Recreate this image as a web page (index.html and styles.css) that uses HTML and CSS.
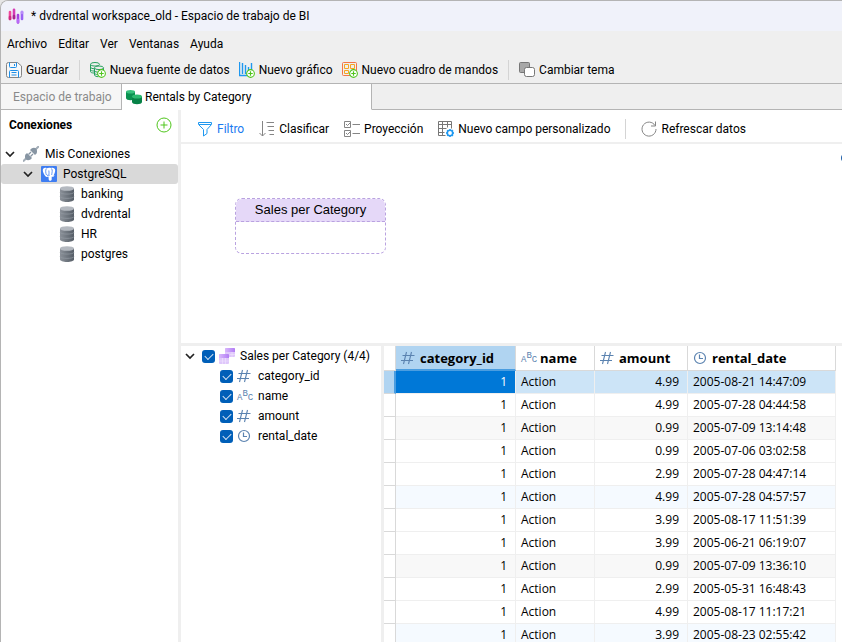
FILE: index.html
```html
<!DOCTYPE html>
<html lang="es">
<head>
    <meta charset="UTF-8">
    <title>dvdrental workspace_old - Espacio de trabajo de BI</title>
    <link rel="stylesheet" href="styles.css">
</head>
<body>
    <!-- Iconos compartidos -->
    <svg class="sprite" width="0" height="0">
        <defs>
            <linearGradient id="grayBand" x1="0" x2="1"><stop offset="0" stop-color="#8a9098"/><stop offset="1" stop-color="#555d66"/></linearGradient>
            <linearGradient id="purpleBand" x1="0" x2="1"><stop offset="0" stop-color="#d9b8fb"/><stop offset="1" stop-color="#b27cf5"/></linearGradient>
        </defs>
        <symbol id="chevron" viewBox="0 0 10 10"><path d="M1 3 5 7 9 3" fill="none" stroke="#222" stroke-width="1.700"/></symbol>
        <symbol id="plus" viewBox="0 0 10 10"><circle cx="5" cy="5" r="4.300" fill="#fff" stroke="#4fc51c" stroke-width="1.200"/><path d="M5 2.500v5M2.500 5h5" stroke="#4fc51c" stroke-width="1.300"/></symbol>
        <symbol id="db" viewBox="0 0 16 16">
            <path d="M1 2.500v11c0 1.300 3 2.500 7 2.500s7-1.200 7-2.500v-11z" fill="url(#grayBand)"/>
            <path d="M1 6.200c0 2.500 14 2.500 14 0M1 10.500c0 2.500 14 2.500 14 0" fill="none" stroke="#949ba3" stroke-width=".7"/>
            <ellipse cx="8" cy="2.500" rx="7" ry="2.300" fill="#b4b9c0"/>
        </symbol>
        <symbol id="hash" viewBox="0 0 14 14"><path d="M5.500 1 2.500 13M10.500 1 7.500 13M1.500 4.500h12M0 9.500h12" fill="none" stroke="#5b83b0" stroke-width="1.100"/></symbol>
        <symbol id="clock" viewBox="0 0 14 14"><circle cx="7" cy="7" r="5.500" fill="none" stroke="#5b83b0" stroke-width="1.200"/><path d="M6.500 3.500v4H10" fill="none" stroke="#5b83b0" stroke-width="1.200"/></symbol>
    </svg>

    <div class="window">
        <header class="titlebar">
            <svg width="16" height="16" viewBox="0 0 16 16" fill="none" stroke-linecap="round" stroke-width="2.600">
                <path d="M2 4v7" stroke="#f0489c"/><path d="M6 1.800v8.500" stroke="#d63bb5"/><path d="M10 7v7.500" stroke="#a63fe0"/><path d="M14 4v7" stroke="#9a62f5"/>
                <path d="M2 9v2" stroke="#d02a80"/><path d="M6 8v2" stroke="#a8238f"/><path d="M10 12v2" stroke="#b867f7"/><path d="M14 4v1" stroke="#b88cfa"/>
            </svg>
            <span>* dvdrental workspace_old - Espacio de trabajo de BI</span>
        </header>

        <nav class="menubar">
            <a href="#">Archivo</a>
            <a href="#">Editar</a>
            <a href="#">Ver</a>
            <a href="#">Ventanas</a>
            <a href="#">Ayuda</a>
        </nav>

        <div class="toolbar">
            <button class="tool">
                <svg width="16" height="16" viewBox="0 0 16 16" fill="none"><path d="M2.500.5h9L15.500 4v9.500a2 2 0 0 1-2 2h-11a2 2 0 0 1-2-2v-11a2 2 0 0 1 2-2z" fill="#f8f8f8" stroke="#858585"/><path d="M3.500.5v4a1 1 0 0 0 1 1h5a1 1 0 0 0 1-1v-4M8.500 2v2M3.500 15.500v-6a1 1 0 0 1 1-1h7a1 1 0 0 1 1 1v6M5.500 10.500h5M5.500 13h5" stroke="#1e8fe8"/></svg>
                Guardar
            </button>
            <span class="separator"></span>
            <button class="tool">
                <svg width="16" height="16" viewBox="0 0 16 16" fill="none"><path d="M.5 2.500v7c0 1 1.500 1.500 3.500 1.500M.5 5c0 1.300 2 1.700 4 1.700M.5 7.500C.5 8.600 2 9 4 9" stroke="#26a05e"/><ellipse cx="5" cy="2.300" rx="4.500" ry="1.800" stroke="#26a05e"/><path d="M4.500 6v7c0 1 2 1.700 4 1.700M13.500 6v3M4.500 8.500c0 1.200 2 1.700 4.500 1.700M4.500 11c0 1 1.500 1.500 3.500 1.500" stroke="#26a05e"/><ellipse cx="9" cy="5.800" rx="4.500" ry="1.800" fill="#eee" stroke="#26a05e"/><use href="#plus" x="7" y="7" width="9" height="9"/></svg>
                Nueva fuente de datos
            </button>
            <button class="tool">
                <svg width="16" height="16" viewBox="0 0 16 16" fill="none"><path d="M.5 0v13.500H8M3.500 1v11M6.500 3v9M9.500 5v4M12.500 1v7" stroke="#1e98f0" stroke-width="1.400"/><use href="#plus" x="7" y="7" width="9" height="9"/></svg>
                Nuevo gráfico
            </button>
            <button class="tool">
                <svg width="16" height="16" viewBox="0 0 16 16" fill="none"><rect x=".5" y=".5" width="14" height="13" rx="1" stroke="#f47645"/><path d="M2.500 2.500h4v4h-4zM8.500 2.500h4v4h-4zM2.500 8.500h4v3h-4z" stroke="#f6a623"/><use href="#plus" x="7" y="7" width="9" height="9"/></svg>
                Nuevo cuadro de mandos
            </button>
            <span class="separator"></span>
            <button class="tool">
                <svg width="16" height="16" viewBox="0 0 16 16"><rect x=".5" y=".5" width="10" height="10" rx="1" fill="#a8a8a8" stroke="#777"/><rect x="5.500" y="5.500" width="10" height="9" rx="2" fill="#fff" stroke="#777"/></svg>
                Cambiar tema
            </button>
        </div>

        <div class="tabs">
            <button class="tab">Espacio de trabajo</button>
            <button class="tab active">
                <svg width="16" height="16" viewBox="0 0 16 16"><path d="M0 3v6c0 3 9 3 9 0V3z" fill="#0b9150"/><ellipse cx="4.500" cy="2.800" rx="4.500" ry="1.800" fill="#37c07c"/><path d="M6 7.500V13c0 3 10 3 10 0V7.500z" fill="#078247"/><ellipse cx="11" cy="7.500" rx="5" ry="2" fill="#2cba70"/></svg>
                Rentals by Category
            </button>
            <div class="tab-rest"></div>
        </div>

        <div class="workspace">
            <aside class="connections">
                <div class="connections-head">
                    <h2>Conexiones</h2>
                    <button class="add" aria-label="Añadir conexión">
                        <svg width="16" height="16" viewBox="0 0 16 16" fill="none" stroke="#4fc51c"><circle cx="8" cy="8" r="7"/><path d="M8 4.500v7M4.500 8h7"/></svg>
                    </button>
                </div>
                <ul class="tree">
                    <li class="level-1">
                        <svg class="arrow"><use href="#chevron"/></svg>
                        <svg width="16" height="16" viewBox="0 0 16 16"><path d="M0 15.500l3.500-3.500M12.500 3.500 16 0" stroke="#a3adb7" stroke-width="2"/><path d="M2.500 8.500 4 7l5 5-1.500 1.500c-1.500 1-3.500 1-4.500 0s-1.500-3.500-.5-5z" fill="#8795a3"/><path d="M7 4l1.500-1.500c1.500-1 3.500-1 4.500 0s1.500 3.500.5 5L12 9z" fill="#8795a3"/><path d="M5.500 8.500 8 6M7.500 10.500 10 8" stroke="#8795a3" stroke-width="1.300"/></svg>
                        <span>Mis Conexiones</span>
                    </li>
                    <li class="level-2 selected">
                        <svg class="arrow"><use href="#chevron"/></svg>
                        <svg width="16" height="16" viewBox="0 0 16 16"><rect width="16" height="16" rx="1" fill="#3e7df2"/><path d="M1.800 4.500c0-2.500 2-3.200 4-2.200 1.300-.8 3-.8 4.200-.2 2-.8 4.200 0 4.200 2.200 0 1.700-.8 3.700-1.700 5.200h1.200c-.5 1-1.700 1.300-3 1.200v2.800c-.3 1.700-2.700 1.700-3 0l-.2-3-1 .3c-1 .5-2-.1-2.600-1.300-.9-1.300-2.100-3.500-2.100-5z" fill="#fff"/><path d="M5.300 2.500c-1 2-.7 4.500.2 6.500M10.500 2.500c1.500 2 .3 4 .2 6.500M8 10c-.2-2 .3-3-.2-5.500M6 9.500 7.500 9" fill="none" stroke="#3e7df2" stroke-width=".8"/></svg>
                        <span>PostgreSQL</span>
                    </li>
                    <li class="level-3"><svg width="16" height="16"><use href="#db"/></svg><span>banking</span></li>
                    <li class="level-3"><svg width="16" height="16"><use href="#db"/></svg><span>dvdrental</span></li>
                    <li class="level-3"><svg width="16" height="16"><use href="#db"/></svg><span>HR</span></li>
                    <li class="level-3"><svg width="16" height="16"><use href="#db"/></svg><span>postgres</span></li>
                </ul>
            </aside>

            <main class="content">
                <div class="actions">
                    <button class="tool on">
                        <svg width="16" height="16" viewBox="0 0 16 16" fill="none" stroke="#1e98f0"><path d="M1.500 1.500h13v2L10 8.500v4L6.500 15V8.500L1.500 3.500zM2 3.500h12"/></svg>
                        Filtro
                    </button>
                    <button class="tool">
                        <svg width="16" height="16" viewBox="0 0 16 16" fill="none" stroke="#858585"><path d="M3.500 0v15M.5 12l3 3 3-3M7.500 1.500H15M8.500 5.500H15M9.500 9.500H15M10.500 13.500H15"/></svg>
                        Clasificar
                    </button>
                    <button class="tool">
                        <svg width="16" height="16" viewBox="0 0 16 16" fill="none" stroke="#858585"><path d="M.5.5h6v6h-6zM.5 9.500h6v6h-6zM2 3l1.500 1.500L6 2M2 12l1.500 1.500L6 11M8.500 3.500H16M8.500 12.500H16"/></svg>
                        Proyección
                    </button>
                    <button class="tool">
                        <svg width="16" height="16" viewBox="0 0 16 16" fill="none"><path d="M.5.500h13v7M.5.500v14h7M.5 3.500h13M.5 7.500h8M.5 11.500h6M4.500.500v14M9.500.500v6" stroke="#777"/><circle cx="12" cy="12" r="2.700" stroke="#1e98f0" stroke-width="1.600"/><path d="M12 8v1M12 15v1M8 12h1M15 12h1M9.200 9.200l.7.7M14.200 14.200l.7.7M9.200 14.800l.7-.7M14.200 9.800l.7-.7" stroke="#1e98f0" stroke-width="1.500"/></svg>
                        Nuevo campo personalizado
                    </button>
                    <span class="separator"></span>
                    <button class="tool">
                        <svg width="16" height="16" viewBox="0 0 16 16" fill="none" stroke="#858585"><path d="M14 4.500A7 7 0 1 0 15 8M14.500.5v4.500H10"/></svg>
                        Refrescar datos
                    </button>
                </div>

                <section class="canvas">
                    <div class="node"><div class="node-title">Sales per Category</div></div>
                    <span class="handle"></span>
                </section>

                <div class="bottom">
                    <section class="fields">
                        <div class="field root">
                            <svg class="arrow"><use href="#chevron"/></svg>
                            <input type="checkbox" id="all" checked>
                            <svg width="16" height="16" viewBox="0 0 16 16"><rect x="6" width="10" height="9" rx="1" fill="#dfc7fb"/><path d="M6 3V1a1 1 0 0 1 1-1h8a1 1 0 0 1 1 1v3H6z" fill="url(#purpleBand)"/><rect y="6" width="10" height="10" rx="1" fill="#dfc7fb"/><path d="M0 10V7a1 1 0 0 1 1-1h8a1 1 0 0 1 1 1v3z" fill="url(#purpleBand)"/><path d="M0 13h10M3.500 10v6M6.500 10v6M10.500 6.500H16M13 4v5" stroke="#f1e5fd" stroke-width=".6"/></svg>
                            <label for="all">Sales per Category (4/4)</label>
                        </div>
                        <div class="field">
                            <input type="checkbox" id="f-category" checked>
                            <svg class="type"><use href="#hash"/></svg>
                            <label for="f-category">category_id</label>
                        </div>
                        <div class="field">
                            <input type="checkbox" id="f-name" checked>
                            <span class="abc">A<sup>B</sup>C</span>
                            <label for="f-name">name</label>
                        </div>
                        <div class="field">
                            <input type="checkbox" id="f-amount" checked>
                            <svg class="type"><use href="#hash"/></svg>
                            <label for="f-amount">amount</label>
                        </div>
                        <div class="field">
                            <input type="checkbox" id="f-date" checked>
                            <svg class="type"><use href="#clock"/></svg>
                            <label for="f-date">rental_date</label>
                        </div>
                    </section>

                    <section class="grid">
                        <table>
                            <colgroup><col class="c-mark"><col class="c-id"><col class="c-name"><col class="c-amount"><col class="c-date"></colgroup>
                            <thead>
                                <tr>
                                    <th class="mark"></th>
                                    <th class="sorted"><div><svg class="type"><use href="#hash"/></svg>category_id</div></th>
                                    <th><div class="text-head"><span class="abc">A<sup>B</sup>C</span>name</div></th>
                                    <th><div><svg class="type"><use href="#hash"/></svg>amount</div></th>
                                    <th><div><svg class="type"><use href="#clock"/></svg>rental_date</div></th>
                                </tr>
                            </thead>
                            <tbody>
                                <tr class="current"><td class="mark"></td><td class="num">1</td><td>Action</td><td class="num">4.99</td><td>2005-08-21 14:47:09</td></tr>
                                <tr><td class="mark"></td><td class="num">1</td><td>Action</td><td class="num">4.99</td><td>2005-07-28 04:44:58</td></tr>
                                <tr><td class="mark"></td><td class="num">1</td><td>Action</td><td class="num">0.99</td><td>2005-07-09 13:14:48</td></tr>
                                <tr><td class="mark"></td><td class="num">1</td><td>Action</td><td class="num">0.99</td><td>2005-07-06 03:02:58</td></tr>
                                <tr><td class="mark"></td><td class="num">1</td><td>Action</td><td class="num">2.99</td><td>2005-07-28 04:47:14</td></tr>
                                <tr><td class="mark"></td><td class="num">1</td><td>Action</td><td class="num">4.99</td><td>2005-07-28 04:57:57</td></tr>
                                <tr><td class="mark"></td><td class="num">1</td><td>Action</td><td class="num">3.99</td><td>2005-08-17 11:51:39</td></tr>
                                <tr><td class="mark"></td><td class="num">1</td><td>Action</td><td class="num">3.99</td><td>2005-06-21 06:19:07</td></tr>
                                <tr><td class="mark"></td><td class="num">1</td><td>Action</td><td class="num">0.99</td><td>2005-07-09 13:36:10</td></tr>
                                <tr><td class="mark"></td><td class="num">1</td><td>Action</td><td class="num">2.99</td><td>2005-05-31 16:48:43</td></tr>
                                <tr><td class="mark"></td><td class="num">1</td><td>Action</td><td class="num">4.99</td><td>2005-08-17 11:17:21</td></tr>
                                <tr><td class="mark"></td><td class="num">1</td><td>Action</td><td class="num">3.99</td><td>2005-08-23 02:55:42</td></tr>
                            </tbody>
                        </table>
                    </section>
                </div>
            </main>
        </div>
    </div>
</body>
</html>
```
FILE: styles.css
```css
* {
    box-sizing: border-box;
}
body {
    margin: 0;
    background-color: #e6e6e6;
    color: #000;
    font: 12px/20px Roboto, "Open Sans", sans-serif;
}
button {
    padding: 0;
    border: none;
    background: none;
    color: inherit;
    font: inherit;
    cursor: pointer;
}
svg {
    flex: none;
}
.sprite {
    position: absolute;
}
.window {
    display: flex;
    flex-direction: column;
    height: 100vh;
    overflow: hidden;
    border: 1px solid #b4b4b4;
    border-width: 1px 0 0 1px;
    border-top-left-radius: 8px;
    background-color: #efefef;
}

/* Barra de título y menú */
.titlebar {
    display: flex;
    align-items: center;
    gap: 7px;
    height: 30px;
    padding-left: 7px;
    background-color: #f0f2fa;
}
.menubar {
    display: flex;
    align-items: center;
    gap: 11px;
    height: 26px;
    padding-left: 6px;
}
.menubar a {
    color: inherit;
    text-decoration: none;
}

/* Barras de herramientas */
.toolbar {
    display: flex;
    align-items: center;
    gap: 9px;
    height: 26px;
    padding-left: 5px;
}
.toolbar .separator {
    margin: 0 1px;
}
.tool {
    display: flex;
    align-items: center;
    gap: 4px;
    white-space: nowrap;
}
.tool.on {
    color: #1a7af0;
}
.separator {
    width: 1px;
    height: 20px;
    background-color: #d4d4d4;
}

/* Pestañas */
.tabs {
    display: flex;
    height: 27px;
    border-top: 1px solid #b4b4b4;
}
.tab {
    display: flex;
    align-items: center;
    width: 121px;
    padding-left: 12px;
    border-right: 1px solid #b4b4b4;
    border-bottom: 1px solid #b4b4b4;
    background-color: #f6f6f6;
    color: #8a8a8a;
    white-space: nowrap;
}
.tab.active {
    gap: 3px;
    width: 250px;
    padding-left: 4px;
    border-bottom-color: #fff;
    background-color: #fff;
    color: #000;
}
.tab-rest {
    flex: 1;
    border-bottom: 1px solid #b4b4b4;
}

.workspace {
    display: flex;
    flex: 1;
    min-height: 0;
    background-color: #fff;
}

/* Conexiones */
.connections {
    flex: none;
    width: 180px;
    border-right: 3px solid #efefef;
}
.connections-head {
    display: flex;
    align-items: center;
    justify-content: space-between;
    height: 34px;
    padding: 0 6px 4px 8px;
}
.connections-head h2 {
    margin: 0;
    font-size: 12px;
    font-weight: bold;
}
.add svg {
    display: block;
}
.tree {
    margin: 0;
    padding: 0;
    list-style: none;
}
.tree li {
    display: flex;
    align-items: center;
    gap: 6px;
    height: 20px;
}
.tree .level-1 {
    padding-left: 4px;
}
.tree .level-2 {
    padding-left: 22px;
}
.tree .level-3 {
    padding-left: 58px;
}
.tree .selected {
    border-radius: 3px;
    background-color: #d9d9d9;
}
.arrow {
    width: 10px;
    height: 10px;
    margin-right: 2px;
}

/* Área principal */
.content {
    display: flex;
    flex: 1;
    flex-direction: column;
    min-width: 0;
}
.actions {
    display: flex;
    flex: none;
    align-items: center;
    gap: 15px;
    height: 34px;
    padding: 5px 0 0 16px;
    border-bottom: 2px solid #efefef;
}
.canvas {
    position: relative;
    flex: none;
    height: 202px;
    border-bottom: 3px solid #efefef;
    overflow: hidden;
}
.node {
    position: absolute;
    top: 54px;
    left: 54px;
    width: 151px;
    height: 56px;
    border: 1px dashed #b9a2e0;
    border-radius: 7px;
    overflow: hidden;
}
.node-title {
    height: 23px;
    border-bottom: 1px dashed #b9a2e0;
    background-color: #e5d8f8;
    font: 13px/22px "Liberation Sans", Arial, sans-serif;
    text-align: center;
}
.handle {
    position: absolute;
    top: 10px;
    right: -7px;
    width: 8px;
    height: 8px;
    border-radius: 50%;
    background-color: #1f5fa8;
}
.bottom {
    display: flex;
    flex: 1;
    min-height: 0;
}

/* Campos */
.fields {
    flex: none;
    width: 203px;
    border-right: 3px solid #efefef;
}
.field {
    display: flex;
    align-items: center;
    height: 20px;
    padding-left: 39px;
}
.field.root {
    padding-left: 4px;
}
.field .arrow {
    margin-right: 7px;
}
.field input {
    display: grid;
    place-items: center;
    flex: none;
    width: 13px;
    height: 13px;
    margin: 0 4px 0 0;
    border-radius: 3px;
    background-color: #005fb8;
    appearance: none;
}
.field input:checked::before {
    content: "";
    width: 7px;
    height: 4px;
    margin-bottom: 2px;
    border: 1px solid #d5e4f2;
    border-width: 0 0 1px 1px;
    transform: rotate(-45deg);
}
.field label {
    margin-left: 5px;
    white-space: nowrap;
}
.type {
    width: 14px;
    height: 14px;
}
.field .type {
    margin-right: 2px;
}
.abc {
    flex: none;
    width: 16px;
    padding-top: 4px;
    color: #5b83b0;
    font: 9px/14px "Liberation Mono", monospace;
    white-space: nowrap;
}
.abc sup {
    font-size: 9px;
    line-height: 1px;
}

/* Tabla de datos */
.grid {
    flex: 1;
    min-width: 0;
    overflow: hidden;
    font-family: "Open Sans", "Noto Sans", sans-serif;
}
table {
    width: 452px;
    border-collapse: separate;
    border-spacing: 0;
    table-layout: fixed;
}
.c-mark {
    width: 12px;
}
.c-id {
    width: 120px;
}
.c-name {
    width: 79px;
}
.c-amount {
    width: 93px;
}
th,
td {
    height: 23px;
    padding: 0 8px 0 5px;
    border-right: 1px solid #efefef;
    border-bottom: 1px solid #efefef;
    text-align: left;
    white-space: nowrap;
}
th {
    height: 25px;
    border-color: #d9d9d9;
    font-size: 13px;
}
th div {
    display: flex;
    align-items: center;
    gap: 5px;
}
th .text-head {
    gap: 3px;
}
th.sorted {
    border-bottom: 2px solid #4a9de0;
    background-color: #b0d4f1;
}
.mark {
    padding: 0;
    border-color: #d9d9d9;
}
.num {
    text-align: right;
}
tbody tr:nth-child(6n + 3) td:not(.mark) {
    background-color: #f8f8f8;
}
tbody tr:nth-child(6n) td:not(.mark) {
    background-color: #f5faff;
}
.current td {
    background-color: #cce4f7;
}
.current .mark {
    border-right: 2px solid #4a9de0;
    background-color: #b0d4f1;
}
.current .mark + td {
    background-color: #0078d7;
    color: #fff;
}
```
